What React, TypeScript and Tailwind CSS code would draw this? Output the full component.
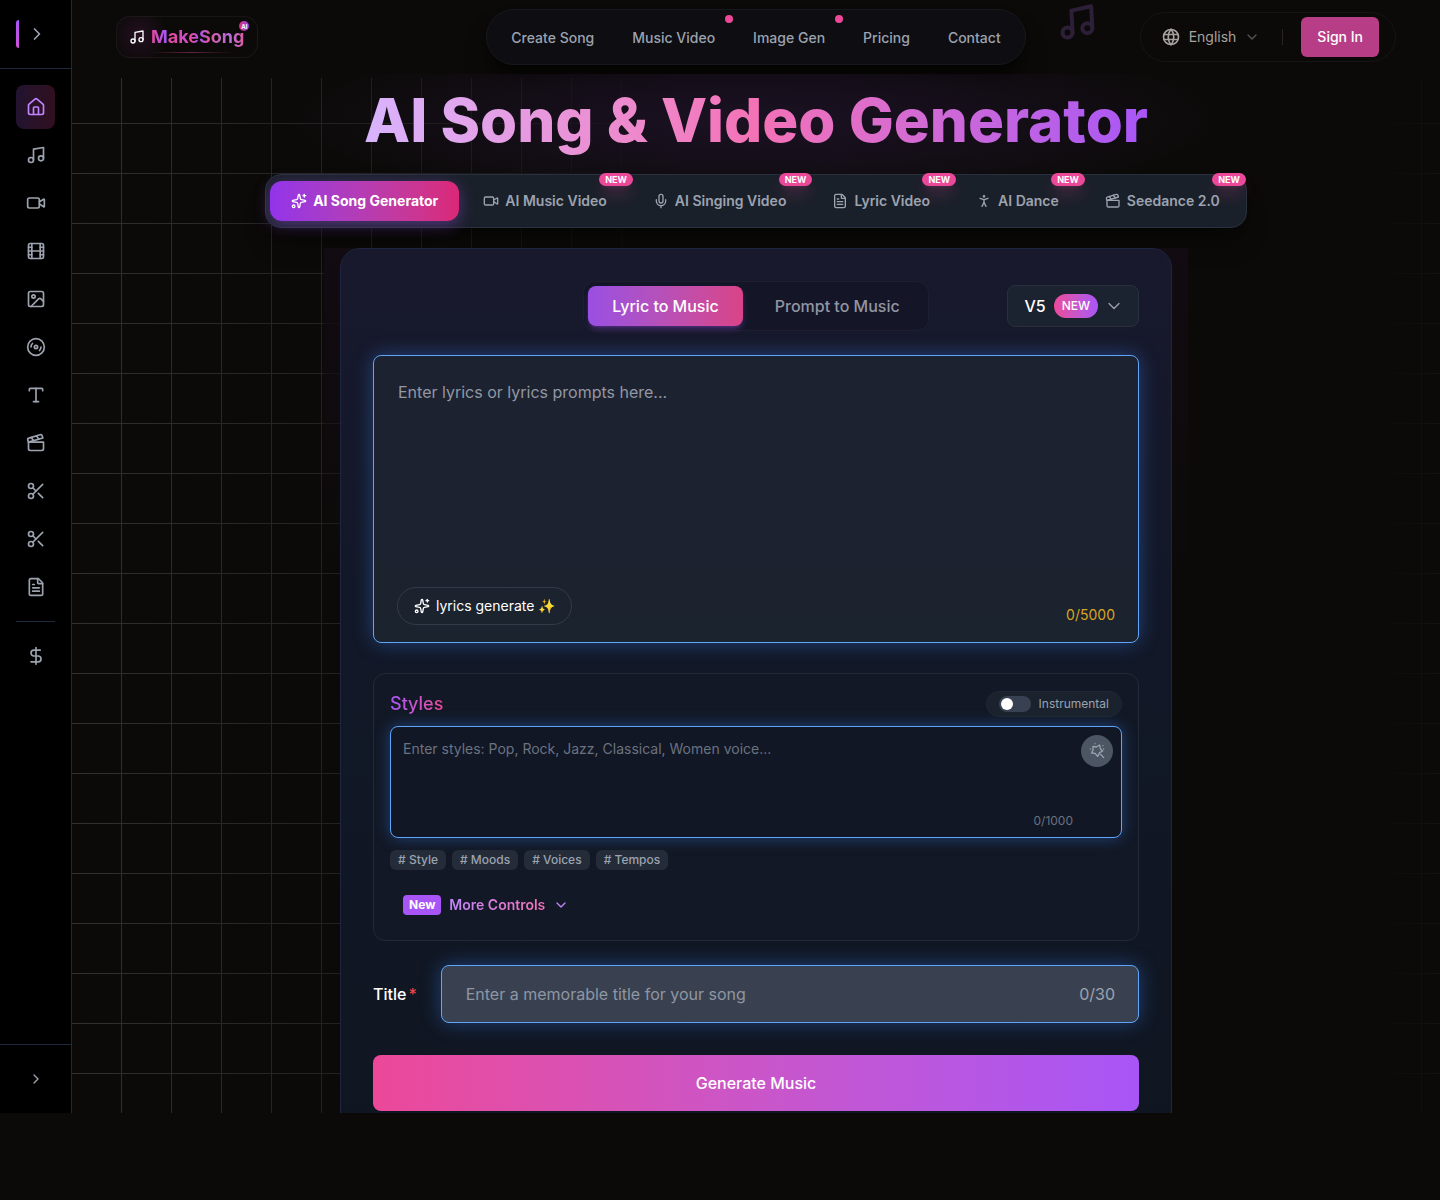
import { useState } from "react";
import {
  ChevronDown,
  ChevronRight,
  Clapperboard,
  Disc3,
  DollarSign,
  FileText,
  Film,
  House,
  Image,
  Mic,
  Music,
  PersonStanding,
  Scissors,
  Sparkles,
  Type,
  Video,
} from "lucide-react";
import { TbWorld } from "react-icons/tb";

const sideLinks = [
  { label: "Home", icon: House, active: true },
  { label: "AI Song", icon: Music },
  { label: "Music Video", icon: Video },
  { label: "Film", icon: Film },
  { label: "Image", icon: Image },
  { label: "Album", icon: Disc3 },
  { label: "Text", icon: Type },
  { label: "Clips", icon: Clapperboard },
  { label: "Vocal Remover", icon: Scissors },
  { label: "Audio Cutter", icon: Scissors },
  { label: "Lyrics", icon: FileText },
];

const navLinks = [
  { label: "Create Song" },
  { label: "Music Video", dot: true },
  { label: "Image Gen", dot: true },
  { label: "Pricing" },
  { label: "Contact" },
];

const tools = [
  { label: "AI Song Generator", icon: Sparkles },
  { label: "AI Music Video", icon: Video, isNew: true },
  { label: "AI Singing Video", icon: Mic, isNew: true },
  { label: "Lyric Video", icon: FileText, isNew: true },
  { label: "AI Dance", icon: PersonStanding, isNew: true },
  { label: "Seedance 2.0", icon: Clapperboard, isNew: true },
];

const tags = ["Style", "Moods", "Voices", "Tempos"];

const StarWand = () => (
  <svg
    viewBox="0 0 24 24"
    className="size-4"
    fill="none"
    stroke="currentColor"
    strokeWidth="2"
    strokeLinecap="round"
    strokeLinejoin="round"
  >
    <path d="M6 5l5 1 5-3 1 5.500 3.500 3.500-4.500 2.500L13 20l-4-4.500-5-.5 2-5z" />
    <path d="M17.500 17l4.500 5M2 9v.01M9 1v.01M21 4v.01M22 9v.01" />
  </svg>
);

const Sidebar = () => (
  <aside className="flex w-[72px] shrink-0 flex-col border-r border-slate-800 bg-black text-[#9ca3af]">
    <div className="flex h-[69px] items-center gap-2 border-b border-slate-800 px-4">
      <span className="h-7 w-[3px] rounded-l-lg bg-linear-to-b from-[#a855f7] to-[#d04fd8]" />
      <button aria-label="Expand menu">
        <ChevronRight className="size-5" />
      </button>
    </div>
    <nav className="flex flex-1 flex-col px-4 pt-4">
      <ul className="flex flex-col gap-1">
        {sideLinks.map(({ label, icon: Icon, active }) => (
          <li key={label}>
            <a
              href="#"
              aria-label={label}
              className={`flex h-11 items-center justify-center rounded-lg ${
                active ? "bg-linear-to-r from-[#221330] to-[#300f1f] text-[#c084fc]" : ""
              }`}
            >
              <Icon className="size-5" />
            </a>
          </li>
        ))}
      </ul>
      <hr className="my-3 border-gray-800" />
      <a href="#" aria-label="Pricing" className="flex h-11 items-center justify-center">
        <DollarSign className="size-5" />
      </a>
    </nav>
    <div className="flex h-[69px] items-center justify-center border-t border-slate-800">
      <button aria-label="Expand sidebar">
        <ChevronRight className="size-4" />
      </button>
    </div>
  </aside>
);

const Header = () => (
  <header className="relative grid h-[74px] shrink-0 grid-cols-[1fr_auto_1fr] items-center px-11">
    <a
      href="#"
      className="relative flex h-[42px] items-center gap-1.5 justify-self-start rounded-[14px] border border-white/5 bg-[radial-gradient(circle_at_22px_18px,#241022_0,transparent_30px)] pr-[13px] pl-3 text-white"
    >
      <Music className="size-4" />
      <span className="bg-[linear-gradient(90deg,#ec4899,#a855f7_16%,#ec4899_22%,#c84fc8_36%,#ec4899_42%,#a855f7_52%,#db5a9f_62%,#b46fd8_84%,#db5a9f)] bg-clip-text text-lg font-bold text-transparent">
        MakeSong
      </span>
      <span className="absolute top-1 right-2 flex size-2.5 items-center justify-center rounded-full bg-linear-to-r from-[#db2777] to-[#9333ea] text-[6px] font-bold">
        AI
      </span>
      <span className="absolute bottom-1 left-8 h-px w-21 bg-linear-to-r from-transparent via-[#ec4899]/40 to-transparent" />
    </a>

    <nav className="flex gap-1.5 rounded-full border border-[#17181d] bg-[#0d0d12] px-2 py-[7px] shadow-xl shadow-black/50">
      {navLinks.map(({ label, dot }) => (
        <a
          key={label}
          href="#"
          className="relative flex h-10 items-center px-4 pt-0.5 text-sm font-medium text-[#9ca3af]"
        >
          {label}
          {dot && <span className="absolute -top-0.5 -right-0.5 size-2 rounded-full bg-[#ec4899]" />}
        </a>
      ))}
    </nav>

    <Music className="absolute top-0.5 right-[343px] size-10 -rotate-3 text-[#2d1f38]" strokeWidth={2.4} />

    <div className="flex h-[50px] items-center justify-self-end rounded-full border border-[#151514] pr-4 pl-5 text-[#a8a29e]">
      <label className="flex items-center gap-2 text-sm">
        <TbWorld className="size-5" />
        <select aria-label="Language" className="field-sizing-content appearance-none bg-transparent">
          <option>English</option>
        </select>
        <ChevronDown className="size-4 text-[#57534e]" />
      </label>
      <span className="mr-[18px] ml-[22px] h-4 w-px bg-[#292524]" />
      <button className="h-10 rounded-md bg-[#b83d87] px-4 text-sm font-medium text-white">Sign In</button>
    </div>
  </header>
);

const ToolTabs = () => {
  const [active, setActive] = useState(tools[0].label);

  return (
    <div className="flex gap-1.5 rounded-2xl border border-[#28313d] bg-[#1a202a] p-1.5 shadow-xl shadow-black/30">
      {tools.map(({ label, icon: Icon, isNew }) => (
        <button
          key={label}
          onClick={() => setActive(label)}
          className={`relative flex h-10 items-center gap-1.5 rounded-xl text-sm whitespace-nowrap ${
            active === label
              ? "-mx-0.5 bg-linear-to-r from-[#9333ea] to-[#db2777] px-[21px] font-bold text-white shadow-[0_4px_16px_#a855f766]"
              : "px-5 font-semibold text-[#9ca3af]"
          }`}
        >
          <Icon className="size-4" />
          {label}
          {isNew && (
            <span className="absolute -top-2 -right-1.5 rounded-full bg-[#ec4899] px-1.5 text-[9px] leading-[13px] font-bold text-white shadow-lg shadow-[#ec4899]/30">
              NEW
            </span>
          )}
        </button>
      ))}
    </div>
  );
};

const SongForm = () => {
  const [mode, setMode] = useState("Lyric to Music");
  const [lyrics, setLyrics] = useState("");
  const [styles, setStyles] = useState("");
  const [title, setTitle] = useState("");

  return (
    <form
      onSubmit={(e) => e.preventDefault()}
      className="rounded-[20px] border border-[#1e2540] bg-linear-to-b from-[#18192d]/98 via-[#111827]/98 via-50% to-[#101621]/98 p-8 pb-12"
    >
      <div className="grid grid-cols-[1fr_auto_1fr] items-center">
        <div className="col-start-2 flex gap-2 rounded-xl border border-white/4 bg-[#141628] p-1">
          {["Lyric to Music", "Prompt to Music"].map((name) => (
            <button
              key={name}
              type="button"
              onClick={() => setMode(name)}
              className={`rounded-lg px-6 py-2 font-medium ${
                mode === name
                  ? "bg-linear-to-r from-[#994fe3] to-[#d94388] text-white shadow-md shadow-[#a855f7]/30"
                  : "text-[#9195a1]"
              }`}
            >
              {name}
            </button>
          ))}
        </div>
        <label className="flex items-center gap-1.5 justify-self-end rounded-lg border border-[#28303e] bg-[#1b2230] py-2 pr-3.5 pl-4 font-medium text-white">
          <select aria-label="Model version" className="mr-0.5 field-sizing-content appearance-none bg-transparent">
            <option>V5</option>
          </select>
          <span className="rounded-full bg-linear-to-r from-[#ec4899] to-[#a855f7] px-2 text-xs leading-6">NEW</span>
          <ChevronDown className="size-5 text-[#9ca3af]" strokeWidth={1.5} />
        </label>
      </div>

      <div className="mt-6 flex h-72 flex-col rounded-lg border border-[#60a5fa] bg-linear-to-b from-[#1d2231] to-[#1b232e] shadow-[0_0_20px_#3b82f666]">
        <textarea
          aria-label="Lyrics"
          value={lyrics}
          onChange={(e) => setLyrics(e.target.value)}
          placeholder="Enter lyrics or lyrics prompts here..."
          className="w-full flex-1 resize-none px-6 pt-6 text-white outline-none placeholder:text-[#9197a3]"
        />
        <div className="flex items-end justify-between px-[23px] pb-[17px]">
          <button
            type="button"
            className="flex h-[38px] items-center gap-1.5 rounded-full border border-[#333b48] px-4 text-sm text-white"
          >
            <Sparkles className="size-4" />
            lyrics generate ✨
          </button>
          <span className="text-sm text-[#d9a521]">{lyrics.length}/5000</span>
        </div>
      </div>

      <section className="mt-[30px] rounded-xl border border-[#232a37] bg-[#121825] px-4 pt-[17px] pb-6">
        <div className="flex h-[26px] items-center justify-between">
          <h2 className="bg-linear-to-r from-[#a855f7] to-[#ec4899] bg-clip-text text-lg font-medium text-transparent">
            Styles
          </h2>
          <label className="flex h-[26px] items-center gap-2 rounded-full border border-[#1f2937] bg-[#1a222e] px-3 text-xs text-[#9ca3af]">
            <input type="checkbox" className="peer sr-only" />
            <span className="flex h-4 w-8 items-center rounded-full bg-[#374151] px-0.5 peer-checked:justify-end peer-checked:bg-[#a855f7]">
              <span className="size-3 rounded-full bg-white" />
            </span>
            Instrumental
          </label>
        </div>
        <div className="mt-[9px] flex h-28 rounded-lg border border-[#60a5fa] bg-[#111725] shadow-[0_0_16px_#3b82f666]">
          <textarea
            aria-label="Styles"
            value={styles}
            onChange={(e) => setStyles(e.target.value)}
            placeholder="Enter styles: Pop, Rock, Jazz, Classical, Women voice..."
            className="flex-1 resize-none p-3 text-sm text-white outline-none placeholder:text-[#6b7280]"
          />
          <span className="self-end pb-2 text-xs text-[#6b7280]">{styles.length}/1000</span>
          <button
            type="button"
            aria-label="Enhance styles"
            className="m-2 flex size-8 items-center justify-center rounded-full bg-[#4b5563] text-[#9ca3af]"
          >
            <StarWand />
          </button>
        </div>
        <div className="mt-3 flex gap-1.5">
          {tags.map((tag) => (
            <button
              key={tag}
              type="button"
              className="rounded-md bg-[#242c39] px-2 text-xs leading-5 font-medium text-[#9ca3af]"
            >
              # {tag}
            </button>
          ))}
        </div>
        <button type="button" className="mt-[25px] mb-px ml-[13px] flex items-center gap-2 text-sm font-semibold">
          <span className="rounded-sm bg-[#a855f7] px-1.5 text-xs leading-5 font-bold text-white">New</span>
          <span className="bg-linear-to-r from-[#c084fc] to-[#f472b6] bg-clip-text text-transparent">
            More Controls
          </span>
          <ChevronDown className="size-4 text-[#c084fc]" />
        </button>
      </section>

      <div className="mt-6 flex items-center gap-6">
        <label htmlFor="title" className="font-medium text-white">
          Title<span className="ml-0.5 text-[#ef4444]">*</span>
        </label>
        <div className="flex h-[58px] flex-1 items-center rounded-lg border border-[#60a5fa] bg-[#394150] pr-[23px] pl-6 text-[#9ca3af] shadow-[0_0_20px_#3b82f666]">
          <input
            id="title"
            value={title}
            maxLength={30}
            onChange={(e) => setTitle(e.target.value)}
            placeholder="Enter a memorable title for your song"
            className="flex-1 text-white outline-none placeholder:text-[#8f96a3]"
          />
          <span>{title.length}/30</span>
        </div>
      </div>

      <button className="mt-8 h-14 w-full rounded-lg bg-linear-to-r from-[#ec4899] to-[#a855f7] font-medium text-white">
        Generate Music
      </button>
    </form>
  );
};

const App = () => {
  return (
    <div className="flex h-screen overflow-hidden bg-[#0b0a08] pb-[87px] font-['Inter','Liberation_Sans',sans-serif]">
      <Sidebar />
      <div className="flex min-w-0 flex-1 flex-col overflow-hidden">
        <Header />
        <main className="relative flex min-h-0 flex-1 flex-col items-center overflow-hidden">
          {/* title glow, then the faded grid over it */}
          <div className="absolute top-0 h-25 w-full max-w-[960px] bg-[radial-gradient(ellipse_50%_90%_at_50%_45%,#1b1123,#1b112399_50%,transparent)]" />
          <div className="absolute inset-x-0 top-1 bottom-0 bg-[linear-gradient(90deg,transparent_49px,#32312f_49px),linear-gradient(180deg,transparent_49px,#32312f_49px)] mask-[linear-gradient(90deg,black,#0009_20%,transparent_45%,transparent_95%,#ffffff33)] bg-size-[50px_50px] bg-position-[0_-4px]" />
          <div className="relative flex w-full shrink-0 flex-col items-center">
            <h1 className="mt-2 bg-linear-to-r from-[#d8b4fe] via-[#f472b6] to-[#a855f7] bg-clip-text text-6xl leading-[76px] font-extrabold whitespace-nowrap text-transparent">
              AI Song &amp; Video Generator
            </h1>
            <div className="mt-4">
              <ToolTabs />
            </div>
            <div className="mt-5 w-full max-w-[864px] bg-linear-to-b from-[#120b12] to-transparent to-40% px-4">
              <SongForm />
            </div>
          </div>
        </main>
      </div>
    </div>
  );
};

export default App;
